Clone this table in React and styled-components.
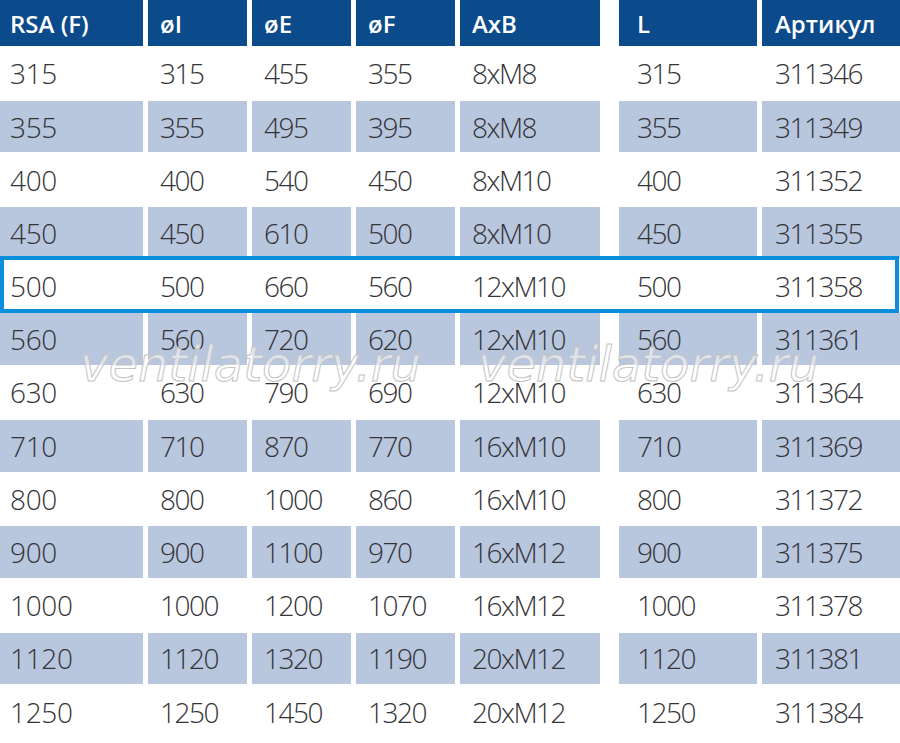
import React from "react";
import styled, { createGlobalStyle } from "styled-components";

const GlobalStyle = createGlobalStyle`
  html, body {
    margin: 0;
    padding: 0;
    background: #ffffff;
  }
`;

const Page = styled.div`
  position: relative;
  width: 900px;
  height: 743px;
  overflow: hidden;
  font-family: "Open Sans", "Noto Sans", sans-serif;
`;

const Table = styled.div`
  display: flex;
  flex-direction: column;
  gap: 1.5px;
`;

const Row = styled.div`
  position: relative;
  display: grid;
  grid-template-columns: 143px 99px 99px 99px 140px 152px 138px;
  column-gap: 5px;
  height: ${(p) => (p.$head ? "46px" : "51.7px")};

  ${(p) =>
    p.$active &&
    `
    &::after {
      content: "";
      position: absolute;
      left: 0;
      right: 1px;
      top: -4px;
      bottom: -1px;
      border: 4px solid #0a8fdc;
      pointer-events: none;
    }
  `}
`;

const Cell = styled.div`
  display: flex;
  align-items: center;
  margin-left: ${(p) => (p.$shift ? "14px" : "0")};
  padding-left: ${(p) => p.$pad}px;
  background: ${(p) => (p.$head ? "#0b4a8b" : p.$band ? "#b8c6de" : "transparent")};
  color: ${(p) => (p.$head ? "#ffffff" : "#333438")};
  font-size: ${(p) => (p.$head ? "24px" : "28px")};
  font-weight: ${(p) => (p.$head ? 600 : 300)};
  letter-spacing: ${(p) => (p.$head ? "0" : p.$wide ? "-0.3px" : "-1.5px")};
  white-space: nowrap;
`;

const Watermark = styled.div`
  position: absolute;
  top: 336px;
  left: ${(p) => p.$x}px;
  font-family: "DejaVu Sans", sans-serif;
  font-style: italic;
  font-size: 48px;
  color: rgba(255, 255, 255, 0.55);
  -webkit-text-stroke: 1px #c4c4c4;
  pointer-events: none;
  white-space: nowrap;
`;

const columns = [
  { pad: 10 },
  { pad: 12 },
  { pad: 12 },
  { pad: 12 },
  { pad: 12 },
  { pad: 18, shift: true },
  { pad: 13 },
];

const header = ["RSA (F)", "øI", "øE", "øF", "AxB", "L", "Артикул"];

const rows = [
  ["315", "315", "455", "355", "8xM8", "315", "311346"],
  ["355", "355", "495", "395", "8xM8", "355", "311349"],
  ["400", "400", "540", "450", "8xM10", "400", "311352"],
  ["450", "450", "610", "500", "8xM10", "450", "311355"],
  ["500", "500", "660", "560", "12xM10", "500", "311358"],
  ["560", "560", "720", "620", "12xM10", "560", "311361"],
  ["630", "630", "790", "690", "12xM10", "630", "311364"],
  ["710", "710", "870", "770", "16xM10", "710", "311369"],
  ["800", "800", "1000", "860", "16xM10", "800", "311372"],
  ["900", "900", "1100", "970", "16xM12", "900", "311375"],
  ["1000", "1000", "1200", "1070", "16xM12", "1000", "311378"],
  ["1120", "1120", "1320", "1190", "20xM12", "1120", "311381"],
  ["1250", "1250", "1450", "1320", "20xM12", "1250", "311384"],
];

const App = () => {
  return (
    <Page>
      <GlobalStyle />
      <Table>
        <Row $head>
          {header.map((title, i) => (
            <Cell key={i} $head $pad={columns[i].pad} $shift={columns[i].shift}>
              {title}
            </Cell>
          ))}
        </Row>
        {rows.map((row, r) => (
          <Row key={r} $active={row[0] === "500"}>
            {row.map((value, i) => (
              <Cell
                key={i}
                $band={r % 2 === 1}
                $pad={columns[i].pad}
                $shift={columns[i].shift}
                $wide={i === 0}
              >
                {value}
              </Cell>
            ))}
          </Row>
        ))}
      </Table>
      <Watermark $x={80}>ventilatorry.ru</Watermark>
      <Watermark $x={478}>ventilatorry.ru</Watermark>
    </Page>
  );
};

export default App;
